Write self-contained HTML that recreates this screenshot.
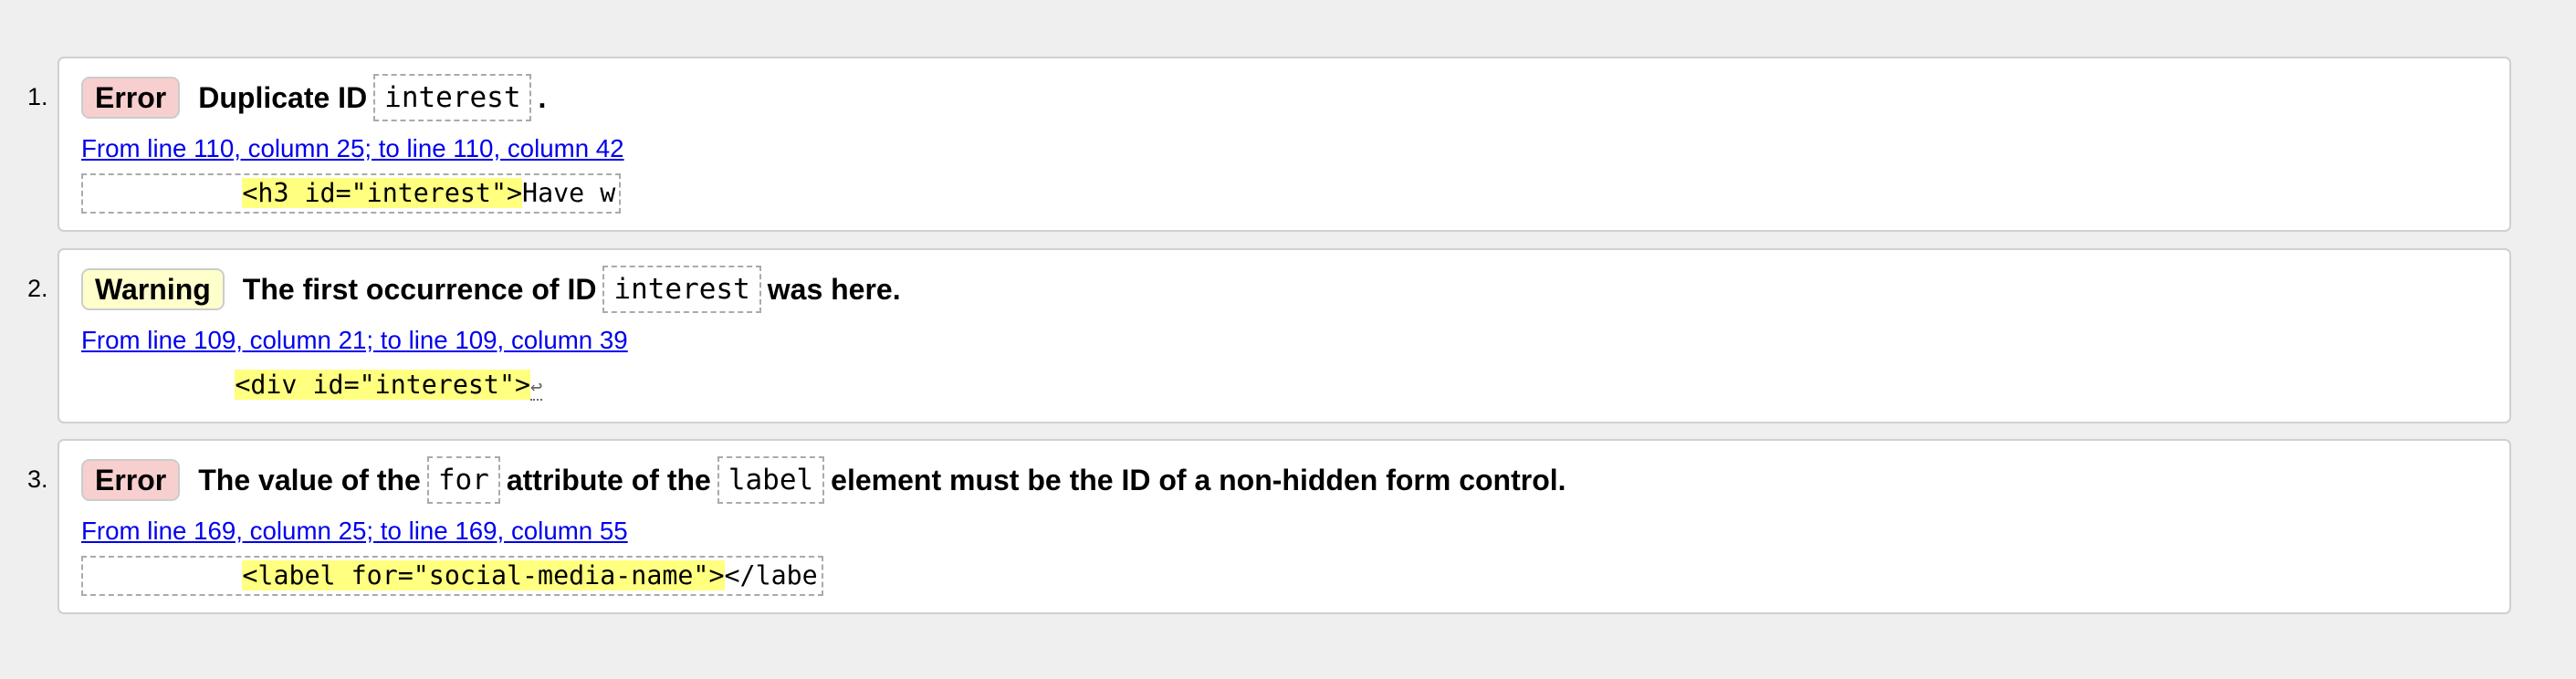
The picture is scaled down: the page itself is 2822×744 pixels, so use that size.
<!DOCTYPE html>
<html><head><meta charset="utf-8"><style>
*{margin:0;padding:0;box-sizing:border-box}
body{width:2822px;height:744px;background:#efefef;font-family:"Liberation Sans",Arial,sans-serif;position:relative;overflow:hidden}
.num{position:absolute;left:30px;font-size:27px;color:#000}
.box{position:absolute;left:63px;width:2688px;height:192px;background:#fff;border:2px solid #d0d0d0;border-radius:7px}
.title{position:absolute;left:24px;top:16px;height:54px;display:flex;align-items:center;font-weight:bold;font-size:32px;white-space:nowrap}
.badge{display:inline-block;height:46px;line-height:42px;padding:0 13px;border:2px solid #ccc;border-radius:9px;margin-right:20px}
.err{background:#f8cfcf}
.warn{background:#ffffcc}
.c{font-family:"DejaVu Sans Mono","Liberation Mono",monospace;font-weight:normal;font-size:31px;border:2px dashed #aaa;padding:6px 10px;margin:0 7px}
.link{position:absolute;left:24px;top:83px;font-size:27.7px;color:#00e;text-decoration:underline;white-space:nowrap}
.ext{position:absolute;left:24px;top:126px;height:44px;font-family:"DejaVu Sans Mono","Liberation Mono",monospace;font-size:28.3px;line-height:40px;white-space:pre;padding:0 4px;border:2px dashed #aaa}
.ext.nb{border-color:transparent;padding-left:13px}
.h{background:#ffff80}
.ret{color:#666;border-bottom:2px dotted #666;font-size:22px}
</style></head><body>
<div class="num" style="top:91px">1.</div>
<div class="box" style="top:62px">
 <div class="title"><span class="badge err">Error</span>Duplicate ID<span class="c">interest</span>.</div>
 <div class="link">From line 110, column 25; to line 110, column 42</div>
 <div class="ext">          <span class="h">&lt;h3 id="interest"&gt;</span>Have w</div>
</div>
<div class="num" style="top:301px">2.</div>
<div class="box" style="top:272px">
 <div class="title"><span class="badge warn">Warning</span>The first occurrence of ID<span class="c">interest</span>was here.</div>
 <div class="link">From line 109, column 21; to line 109, column 39</div>
 <div class="ext nb">         <span class="h">&lt;div id="interest"&gt;</span><span class="ret">↩</span></div>
</div>
<div class="num" style="top:510px">3.</div>
<div class="box" style="top:481px">
 <div class="title"><span class="badge err">Error</span>The value of the<span class="c">for</span>attribute of the<span class="c">label</span>element must be the ID of a non-hidden form control.</div>
 <div class="link">From line 169, column 25; to line 169, column 55</div>
 <div class="ext">          <span class="h">&lt;label for="social-media-name"&gt;</span>&lt;/labe</div>
</div>
</body></html>
